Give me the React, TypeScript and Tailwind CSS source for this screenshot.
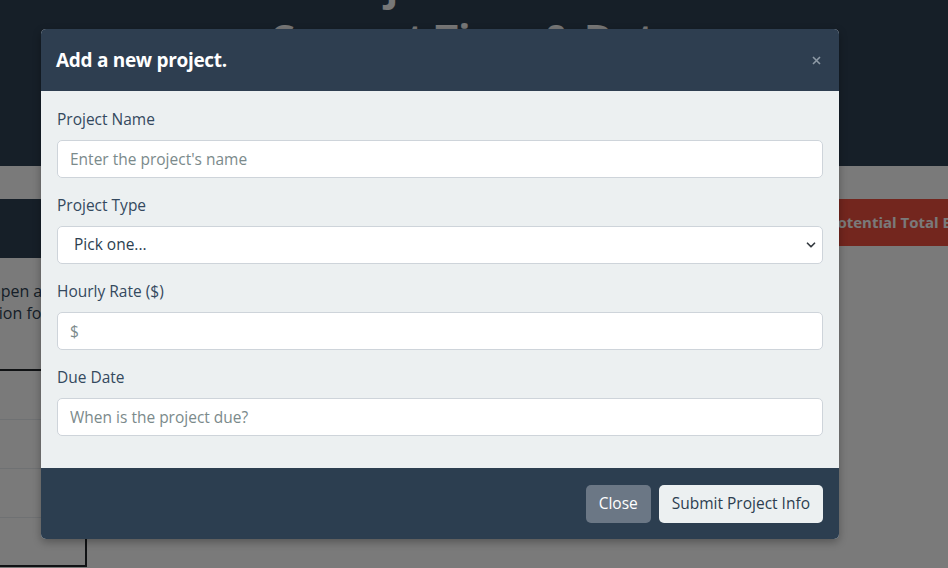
import { ChevronDown } from "lucide-react";

const font = { fontFamily: '"Open Sans", "Noto Sans", sans-serif' };

const Field = ({ label, children }: { label: string; children: React.ReactNode }) => (
  <div className="mb-[15px]">
    <label className="mb-[9px] block text-[15.5px] leading-6 text-[#34495e]">{label}</label>
    {children}
  </div>
);

const inputCls =
  "block h-[38px] w-full rounded-[5px] border border-[#ced4da] bg-white px-3 text-[15.5px] text-[#2c3e50] placeholder:text-[#7b8a8b] outline-none";

const App = () => {
  return (
    <div className="relative h-[568px] w-[948px] overflow-hidden bg-[#f4f4f4]" style={font}>
      {/* page behind the dialog */}
      <header className="flex h-[166px] flex-col items-center bg-[#2c3e50] text-[#eeeeee]">
        <h1 className="-mt-[42px] text-[42px] font-bold leading-[52px]">Project Tracker</h1>
        <h2 className="mt-[2px] text-[40px] font-bold leading-[52px]">Current Time &amp; Date</h2>
      </header>

      <div className="mt-[33px] flex items-start">
        <div className="h-[59px] w-[520px] bg-[#2c3e50]" />
        <div className="ml-auto flex h-[47px] w-[130px] items-center overflow-hidden whitespace-nowrap bg-[#e74c3c] pl-[10px] text-[15px] font-bold text-[#f4f4f4]">
          Potential Total Earnings
        </div>
      </div>

      <div className="mt-[22px] whitespace-nowrap text-[16px] leading-[22px] text-[#2c3e50]">
        <p className="-ml-[9px]">open a new project form</p>
        <p className="-ml-[66px]">information for each one</p>
      </div>

      <div className="mt-[45px] w-[520px] border-t-2 border-[#212529]">
        <div className="h-[49px] border-b border-[#dee2e6]" />
        <div className="h-[49px] border-b border-[#dee2e6]" />
        <div className="h-[49px] border-b border-[#dee2e6]" />
        <div className="h-[49px] w-[87px] border-b-2 border-r-2 border-[#212529]" />
      </div>

      {/* dialog */}
      <div className="absolute inset-0 bg-black/50">
        <div className="ml-[41px] mt-[29px] w-[798px] overflow-hidden rounded-[5px] bg-[#ecf0f1] shadow-[0_3px_8px_rgba(0,0,0,0.3)]">
          <div className="flex h-[62px] items-center justify-between bg-[#2e3e50] px-[15px]">
            <h5 className="text-[19px] font-bold tracking-[-0.3px] text-white">Add a new project.</h5>
            <button className="flex h-4 w-4 items-center justify-center">
              <svg width="9" height="9" viewBox="0 0 9 9">
                <path d="M1 1L8 8M8 1L1 8" stroke="#8e9aa6" strokeWidth="1.6" />
              </svg>
            </button>
          </div>

          <div className="px-4 pb-[17px] pt-4">
            <Field label="Project Name">
              <input className={inputCls} placeholder="Enter the project's name" />
            </Field>
            <Field label="Project Type">
              <div className="relative">
                <select className={inputCls + " appearance-none pl-4"} defaultValue="">
                  <option value="">Pick one...</option>
                </select>
                <ChevronDown
                  size={14}
                  strokeWidth={3}
                  className="pointer-events-none absolute right-[5px] top-[12px] text-[#343a40]"
                />
              </div>
            </Field>
            <Field label="Hourly Rate ($)">
              <input className={inputCls} placeholder="$" />
            </Field>
            <Field label="Due Date">
              <input className={inputCls} placeholder="When is the project due?" />
            </Field>
          </div>

          <div className="flex h-[71px] items-center justify-end gap-2 bg-[#2c3e50] px-4">
            <button className="h-[38px] rounded-[5px] bg-[#6b7785] px-[13px] text-[15.5px] font-medium text-white">
              Close
            </button>
            <button className="h-[38px] rounded-[5px] bg-[#ecf0f1] px-[13px] text-[15.5px] text-[#2c3e50]">
              Submit Project Info
            </button>
          </div>
        </div>
      </div>
    </div>
  );
};

export default App;
